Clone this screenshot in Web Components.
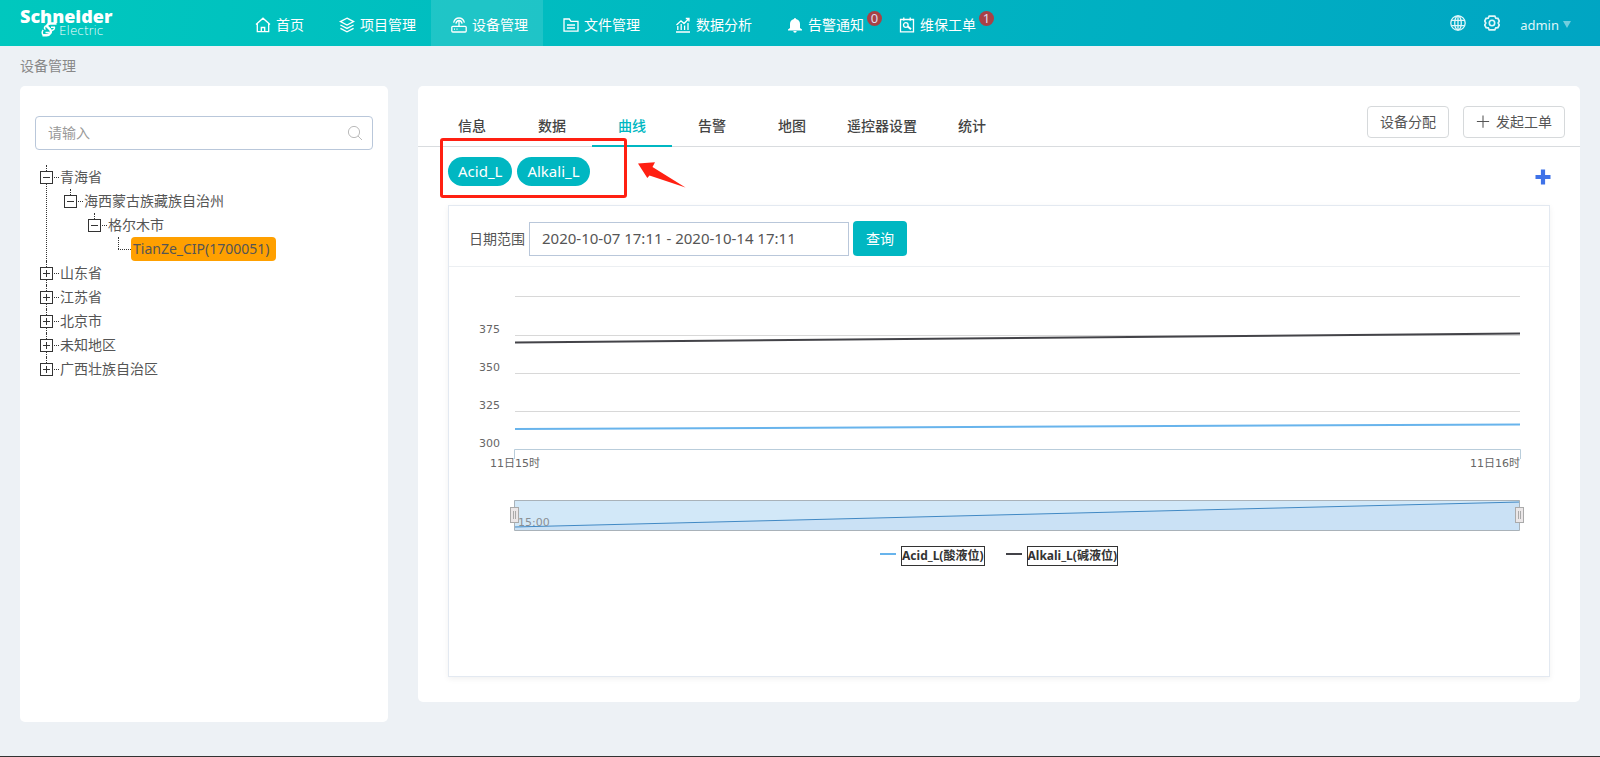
<!DOCTYPE html>
<html lang="zh-CN">
<head>
<meta charset="utf-8">
<title>设备管理</title>
<style>
  body { margin: 0; background: #edf1f5; color: #555; font: 14px/24px "Noto Sans", "Noto Sans CJK SC", sans-serif; }
</style>
</head>
<body>
<device-app></device-app>

<script>
const define = (name, html, setup) => {
  const template = document.createElement('template');
  template.innerHTML = html;
  customElements.define(name, class extends HTMLElement {
    constructor() {
      super();
      this.attachShadow({ mode: 'open' }).append(template.content.cloneNode(true));
    }
    connectedCallback() { if (setup) setup(this, this.shadowRoot); }
  });
};

const icons = {
  home: '<path d="M1 7.5 8 1.2l7 6.3M2.3 6.7v8h11.4v-8M6.3 14.5v-4h3.4v4"/>',
  layers: '<path d="M8 1.2 14.6 4.6 8 8 1.4 4.6zM1.4 8 8 11.4 14.6 8M1.4 11.4 8 14.8l6.6-3.4"/>',
  device: '<rect x=".8" y="9.3" width="14.4" height="5.7" rx="1"/><path d="M8 9V4.5M2.6 5.6C3.4 2.8 5.5 1 8 1s4.600 1.800 5.400 4.600M4.900 6.600C5.300 4.700 6.500 3.500 8 3.500s2.700 1.200 3.100 3.100M3 12.200h1M5.500 12.200h1"/>',
  folder: '<path d="M1 14V2h5.300l1.700 2.300h7v9.900H1zM4 8h8M4 11h8"/>',
  chart: '<path d="M1 15h14M2.800 13V9M6.200 13V7M9.600 13V8.500M13 13V6M1.500 8 6 3.800l3 2.700 5-5M10.800 1.500H14v3"/>',
  bell: '<path fill="currentColor" stroke="none" d="M7 2a1 1 0 0 1 2 0c2.600.5 4 2.500 4 5v4l2 1.600v.8H1v-.8L3 11V7c0-2.500 1.400-4.500 4-5zM6.300 14h3.400a1.700 1.700 0 0 1-3.400 0z"/>',
  order: '<path d="M1.500 2.500h13v12.300h-13zM4.800.5v3.200M11.200.5v3.200"/><circle cx="6.800" cy="8" r="2.300"/><path stroke-width="2" d="m8.500 9.300 3.500 3"/>',
  globe: '<circle cx="8" cy="8" r="7.200"/><ellipse cx="8" cy="8" rx="3.300" ry="7.200"/><path d="M8 .8v14.400M1.600 5.300h12.800M1.600 10.700h12.800"/>',
  gear: '<path stroke-width="1.700" d="M5.200 1.200h5.600l1 1.900 2.100.2L15.300 6l-1.100 2 1.100 2-1.400 2.700-2.100.2-1 1.900H5.200l-1-1.900-2.100-.2L.700 10l1.100-2L.700 6l1.400-2.700 2.100-.2z"/><circle cx="8" cy="8" r="2.700" stroke-width="1.600"/>',
  search: '<circle cx="7" cy="7" r="5.600" stroke-width="1"/><path stroke-width="1" d="m11 11 4 4"/>',
  thinplus: '<path stroke-width="1.200" d="M1 7.500h14M8 .5v14"/>',
  plus: '<path stroke-width="4.200" d="M.5 8h15M8 .5v15"/>'
};
define('ui-icon', `<style>
  :host { display: block; flex: none; width: 16px; height: 16px; }
  svg { display: block; width: 100%; height: 100%; }
</style><svg viewBox="0 0 16 16" fill="none" stroke="currentColor" stroke-width="1.3" aria-hidden="true"></svg>`,
  (el, root) => { root.querySelector('svg').innerHTML = icons[el.getAttribute('name')]; });

define('brand-logo', `<style>
  :host { display: block; position: relative; width: 100px; height: 46px; color: #fff; }
  a { display: block; color: inherit; text-decoration: none; padding-top: 7px; }
  b { display: block; font: 800 18px/18px "Open Sans", "Noto Sans", sans-serif; }
  span { display: block; padding-left: 39px; font: 200 12px/12px "DejaVu Sans", sans-serif; }
  svg { position: absolute; left: 21px; top: 22px; width: 16px; height: 15px; }
</style>
<a href="#"><b>Schneider</b><span>Electric</span></a>
<svg viewBox="0 0 16 15" fill="none" stroke="#fff" aria-hidden="true"><path stroke-width="2.400" d="M15.500 1.500H9.500C6 1.500 5.500 4 7 5.500l2 1.800C11 9.500 9.500 13 5.500 13.200H1.500"/><path stroke-width="1.500" d="M6 3.800C3.500 4 2.500 6.500 4.500 7.500M10 5.200h4M2.200 8C.8 9.500.8 12 2.500 13.200M11 8.500c1.500-.3 2.500-1.500 2.700-3M4.500 10.400h4"/></svg>`);

define('nav-item', `<style>
  :host { display: block; position: relative; }
  a { display: flex; align-items: center; gap: 5px; height: 42px; padding: 4px 15px 0 20px; color: #fff; text-decoration: none; white-space: nowrap; }
  :host([active]) a { background: rgba(255,255,255,.12); }
  .badge { position: absolute; left: 100px; top: 11px; width: 15px; height: 15px; border-radius: 50%; background: #a94145; color: #dde; font-size: 13px; line-height: 15px; text-align: center; }
  .badge[hidden] { display: none; }
</style><a href="#"><ui-icon></ui-icon><span><slot></slot></span></a><span class="badge" hidden></span>`,
  (el, root) => {
    root.querySelector('ui-icon').replaceWith(Object.assign(document.createElement('div'), { innerHTML: `<ui-icon name="${el.getAttribute('icon')}"></ui-icon>` }).firstChild);
    if (el.hasAttribute('badge')) {
      const badge = root.querySelector('.badge');
      badge.hidden = false;
      badge.textContent = el.getAttribute('badge');
    }
  });

define('app-header', `<style>
  :host { display: flex; height: 46px; padding: 0 20px; color: #fff; background: linear-gradient(100deg, #00c8be, #00b8c1 45%, #00a5c3); }
  nav { display: flex; margin-left: 115px; flex: 1; }
  .tools { display: flex; align-items: center; gap: 18px; padding-right: 9px; }
  button { display: flex; align-items: center; border: 0; padding: 0; background: none; color: #dff6f9; font: inherit; cursor: pointer; }
  .user { gap: 4px; padding: 3px 0 0 2px; font-size: 13px; }
  .user i { border: 4px solid transparent; border-top: 7px solid rgba(255,255,255,.45); border-bottom: 0; }
</style>
<brand-logo></brand-logo>
<nav>
  <nav-item icon="home">首页</nav-item>
  <nav-item icon="layers">项目管理</nav-item>
  <nav-item icon="device" active>设备管理</nav-item>
  <nav-item icon="folder">文件管理</nav-item>
  <nav-item icon="chart">数据分析</nav-item>
  <nav-item icon="bell" badge="0">告警通知</nav-item>
  <nav-item icon="order" badge="1">维保工单</nav-item>
</nav>
<div class="tools">
  <button aria-label="语言"><ui-icon name="globe"></ui-icon></button>
  <button aria-label="设置"><ui-icon name="gear"></ui-icon></button>
  <button class="user">admin<i></i></button>
</div>`);

define('search-box', `<style>
  :host { display: flex; align-items: center; height: 32px; border: 1px solid #b9c7da; border-radius: 4px; padding: 0 9px 0 12px; }
  input { flex: 1; min-width: 0; border: 0; outline: 0; padding: 0; font: inherit; color: #555; background: none; }
  input::placeholder { color: #999; opacity: 1; }
  ui-icon { color: #bbb; }
</style><input type="text" placeholder="请输入" aria-label="请输入"><ui-icon name="search"></ui-icon>`);

define('tree-node', `<style>
  :host { display: block; position: relative; --dots: #333; }
  .row { display: flex; align-items: center; height: 24px; }
  button { box-sizing: border-box; flex: none; width: 13px; height: 13px; padding: 0; border: 1px solid #333; border-radius: 0; position: relative;
    background: linear-gradient(#333, #333) center / 7px 1px no-repeat, #fff; }
  :host([closed]) button { background: linear-gradient(#333, #333) center / 7px 1px no-repeat, linear-gradient(#333, #333) center / 1px 7px no-repeat, #fff; }
  .dash { flex: none; width: 5px; margin: 0 1px; border-top: 1px dotted var(--dots); }
  a { color: inherit; text-decoration: none; white-space: nowrap; }
  .kids { padding-left: 24px; }
  :host::before { content: ""; position: absolute; left: 6px; top: 0; bottom: 0; border-left: 1px dotted var(--dots); }
  :host([end])::before { bottom: auto; height: 12px; }
  :host([leaf]) button { visibility: hidden; width: 6px; }
  :host([leaf]) .dash { width: 13px; margin: 0; }
  :host([leaf]) a { background: #ffa000; border-radius: 4px; padding: 0 6px 0 2px; }
</style>
<div class="row"><button aria-label="展开或收起"></button><span class="dash"></span><a href="#"></a></div>
<div class="kids"><slot></slot></div>`,
  (el, root) => {
    root.querySelector('a').textContent = el.getAttribute('label');
    if (el.hasAttribute('leaf')) root.querySelector('button').disabled = true;
  });

define('device-sidebar', `<style>
  :host { display: block; box-sizing: border-box; min-height: 636px; padding: 30px 15px; background: #fff; border-radius: 5px; }
  .tree { margin: 15px 0 0 5px; }
</style>
<search-box></search-box>
<div class="tree">
  <tree-node label="青海省">
    <tree-node label="海西蒙古族藏族自治州" end>
      <tree-node label="格尔木市" end>
        <tree-node label="TianZe_CIP(1700051)" leaf end></tree-node>
      </tree-node>
    </tree-node>
  </tree-node>
  <tree-node label="山东省" closed></tree-node>
  <tree-node label="江苏省" closed></tree-node>
  <tree-node label="北京市" closed></tree-node>
  <tree-node label="未知地区" closed></tree-node>
  <tree-node label="广西壮族自治区" closed end></tree-node>
</div>`);

define('tab-item', `<style>
  :host { display: block; }
  button { box-sizing: border-box; min-width: 80px; height: 41px; padding: 0 15px; border: 0; border-bottom: 2px solid transparent; background: none; color: #444; font: inherit; font-weight: 500; white-space: nowrap; }
  :host([active]) button { color: #00b7c2; border-color: #00b7c2; }
</style><button role="tab"><slot></slot></button>`);

define('tab-bar', `<style>
  :host { display: flex; justify-content: space-between; box-sizing: border-box; height: 61px; padding: 0 15px 0 14px; border-bottom: 1px solid #d9dcdf; }
  .tabs { display: flex; align-items: flex-end; margin-bottom: -1px; }
  .actions { display: flex; gap: 14px; padding-top: 20px; }
  .actions button { display: flex; align-items: center; gap: 6px; height: 32px; padding: 0 12px; border: 1px solid #d6d9db; border-radius: 4px; background: #fff; color: #555; font: inherit; }
  ui-icon { width: 14px; height: 14px; }
</style>
<div class="tabs" role="tablist">
  <tab-item>信息</tab-item><tab-item>数据</tab-item><tab-item active>曲线</tab-item><tab-item>告警</tab-item><tab-item>地图</tab-item><tab-item>遥控器设置</tab-item><tab-item>统计</tab-item>
</div>
<div class="actions"><button>设备分配</button><button><ui-icon name="thinplus"></ui-icon>发起工单</button></div>`);

define('point-pills', `<style>
  :host { display: flex; align-items: flex-start; gap: 5px; padding: 10px 29px 19px 30px; }
  .pill { height: 29px; padding: 0 10px 2px; border: 0; border-radius: 15px; background: #00b7c2; color: #fff; font: inherit; font-size: 15px; }
  .add { margin: 12px 0 0 auto; padding: 0; border: 0; background: none; color: #3f72e8; }
</style>
<button class="pill">Acid_L</button><button class="pill">Alkali_L</button>
<button class="add" aria-label="添加"><ui-icon name="plus"></ui-icon></button>`);

define('date-query', `<style>
  :host { display: flex; align-items: center; gap: 4px; height: 55px; padding: 5px 0 0 20px; border-bottom: 1px solid #eceff2; }
  label { line-height: 24px; }
  input { box-sizing: border-box; width: 320px; height: 34px; border: 1px solid #b9c7da; padding: 0 12px 2px; color: #555; font: inherit; font-size: 15px; }
  button { height: 35px; padding: 0 13px; border: 0; border-radius: 4px; background: #00b7c2; color: #fff; font: inherit; }
</style>
<label for="range">日期范围</label><input id="range" type="text" value="2020-10-07 17:11 - 2020-10-14 17:11"><button>查询</button>`);

define('line-chart', `<style>
  :host { display: block; padding: 29px 29px 110px 0; color: #666; font: 11px/16px "DejaVu Sans", "Noto Sans CJK SC", sans-serif; }
  svg { display: block; width: 100%; overflow: visible; }
  svg * { vector-effect: non-scaling-stroke; }
  .plot { display: grid; grid-template-columns: 66px 1fr; }
  .y { padding: 15px 15px 0 0; height: 145px; }
  .y div { height: 38px; line-height: 38px; text-align: right; }
  .x { display: flex; justify-content: space-between; margin-left: 41px; }
  .nav { position: relative; margin: 28px 0 0 65px; height: 30px; }
  .nav span { position: absolute; left: 4px; top: 15px; color: #8a8f94; }
  .nav i { position: absolute; top: 7px; box-sizing: border-box; width: 9px; height: 16px; border: 1px solid #aaa; background: linear-gradient(#aaa, #aaa) 2px 3px / 1px 8px no-repeat, linear-gradient(#aaa, #aaa) 4px 3px / 1px 8px no-repeat, #ebe7e8; }
  .l { left: -4px; } .r { right: -4px; }
  .legend { display: flex; justify-content: center; gap: 21px; margin: 16px 0 0 29px; color: #333; font: bold 12px/18px "Noto Sans", "Noto Sans CJK SC", sans-serif; }
  .legend div { display: flex; align-items: flex-start; gap: 5px; }
  .legend div::before { content: ""; width: 16px; height: 2px; margin-top: 7px; background: var(--c); }
  .legend span { border: 1px solid #333; }
</style>
<div class="plot">
  <div class="y"><div>375</div><div>350</div><div>325</div><div>300</div></div>
  <svg height="160" viewBox="0 0 1005 160" preserveAspectRatio="none" fill="none" aria-hidden="true">
    <path stroke="#d8d8d8" d="M0 .5h1005M0 39.500h1005M0 77.500h1005M0 115.500h1005"/>
    <path stroke="#b9cddb" d="M-.5 163v-9.500h1006v9.500"/>
    <path stroke="#434348" stroke-width="2" d="M0 46.500 1005 37.500"/>
    <path stroke="#68b4ec" stroke-width="2" d="M0 133 1005 128.500"/>
  </svg>
</div>
<div class="x"><span>11日15时</span><span>11日16时</span></div>
<div class="nav">
  <svg height="30" viewBox="0 0 1006 30" preserveAspectRatio="none" aria-hidden="true">
    <path fill="#d2e8f8" d="M0 0h1006v30H0z"/>
    <path fill="#cae1f5" d="M0 27 1006 2v28H0z"/>
    <path fill="none" stroke="#4189c4" d="M0 27 1006 2"/>
    <path fill="none" stroke="#a9b2b9" d="M.5.5h1005v30H.5z"/>
  </svg>
  <span>15:00</span><i class="l"></i><i class="r"></i>
</div>
<div class="legend"><div style="--c:#68b4ec"><span>Acid_L(酸液位)</span></div><div style="--c:#434348"><span>Alkali_L(碱液位)</span></div></div>`);

define('callout-mark', `<style>
  :host { position: absolute; left: 22px; top: 52px; display: flex; pointer-events: none; }
  .frame { box-sizing: border-box; width: 187px; height: 60px; border: 3px solid #ff2012; border-radius: 3px; }
  svg { margin: 23px 0 0 10px; }
</style><div class="frame"></div>
<svg width="50" height="28" viewBox="0 0 50 28" aria-hidden="true"><path fill="#ff2012" d="M1 2.500 18 1.300 15.500 6 48.500 26.500 12.500 14.500 10.300 17z"/></svg>`);

define('device-detail', `<style>
  :host { display: block; position: relative; background: #fff; border-radius: 5px; padding-bottom: 25px; }
  section { margin: 0 30px; border: 1px solid #e3e9f1; box-shadow: 0 2px 6px rgba(0,0,0,.06); }
</style>
<tab-bar></tab-bar>
<point-pills></point-pills>
<section><date-query></date-query><line-chart></line-chart></section>
<callout-mark></callout-mark>`);

define('device-app', `<style>
  :host { display: block; box-sizing: border-box; min-height: 100vh; border-bottom: 1px solid #333; }
  .crumb { height: 40px; padding-left: 20px; line-height: 40px; color: #888; }
  main { display: grid; grid-template-columns: 368px minmax(0, 1fr); gap: 30px; align-items: start; padding: 0 20px; }
</style>
<app-header></app-header>
<div class="crumb">设备管理</div>
<main><device-sidebar></device-sidebar><device-detail></device-detail></main>`);
</script>
</body>
</html>
